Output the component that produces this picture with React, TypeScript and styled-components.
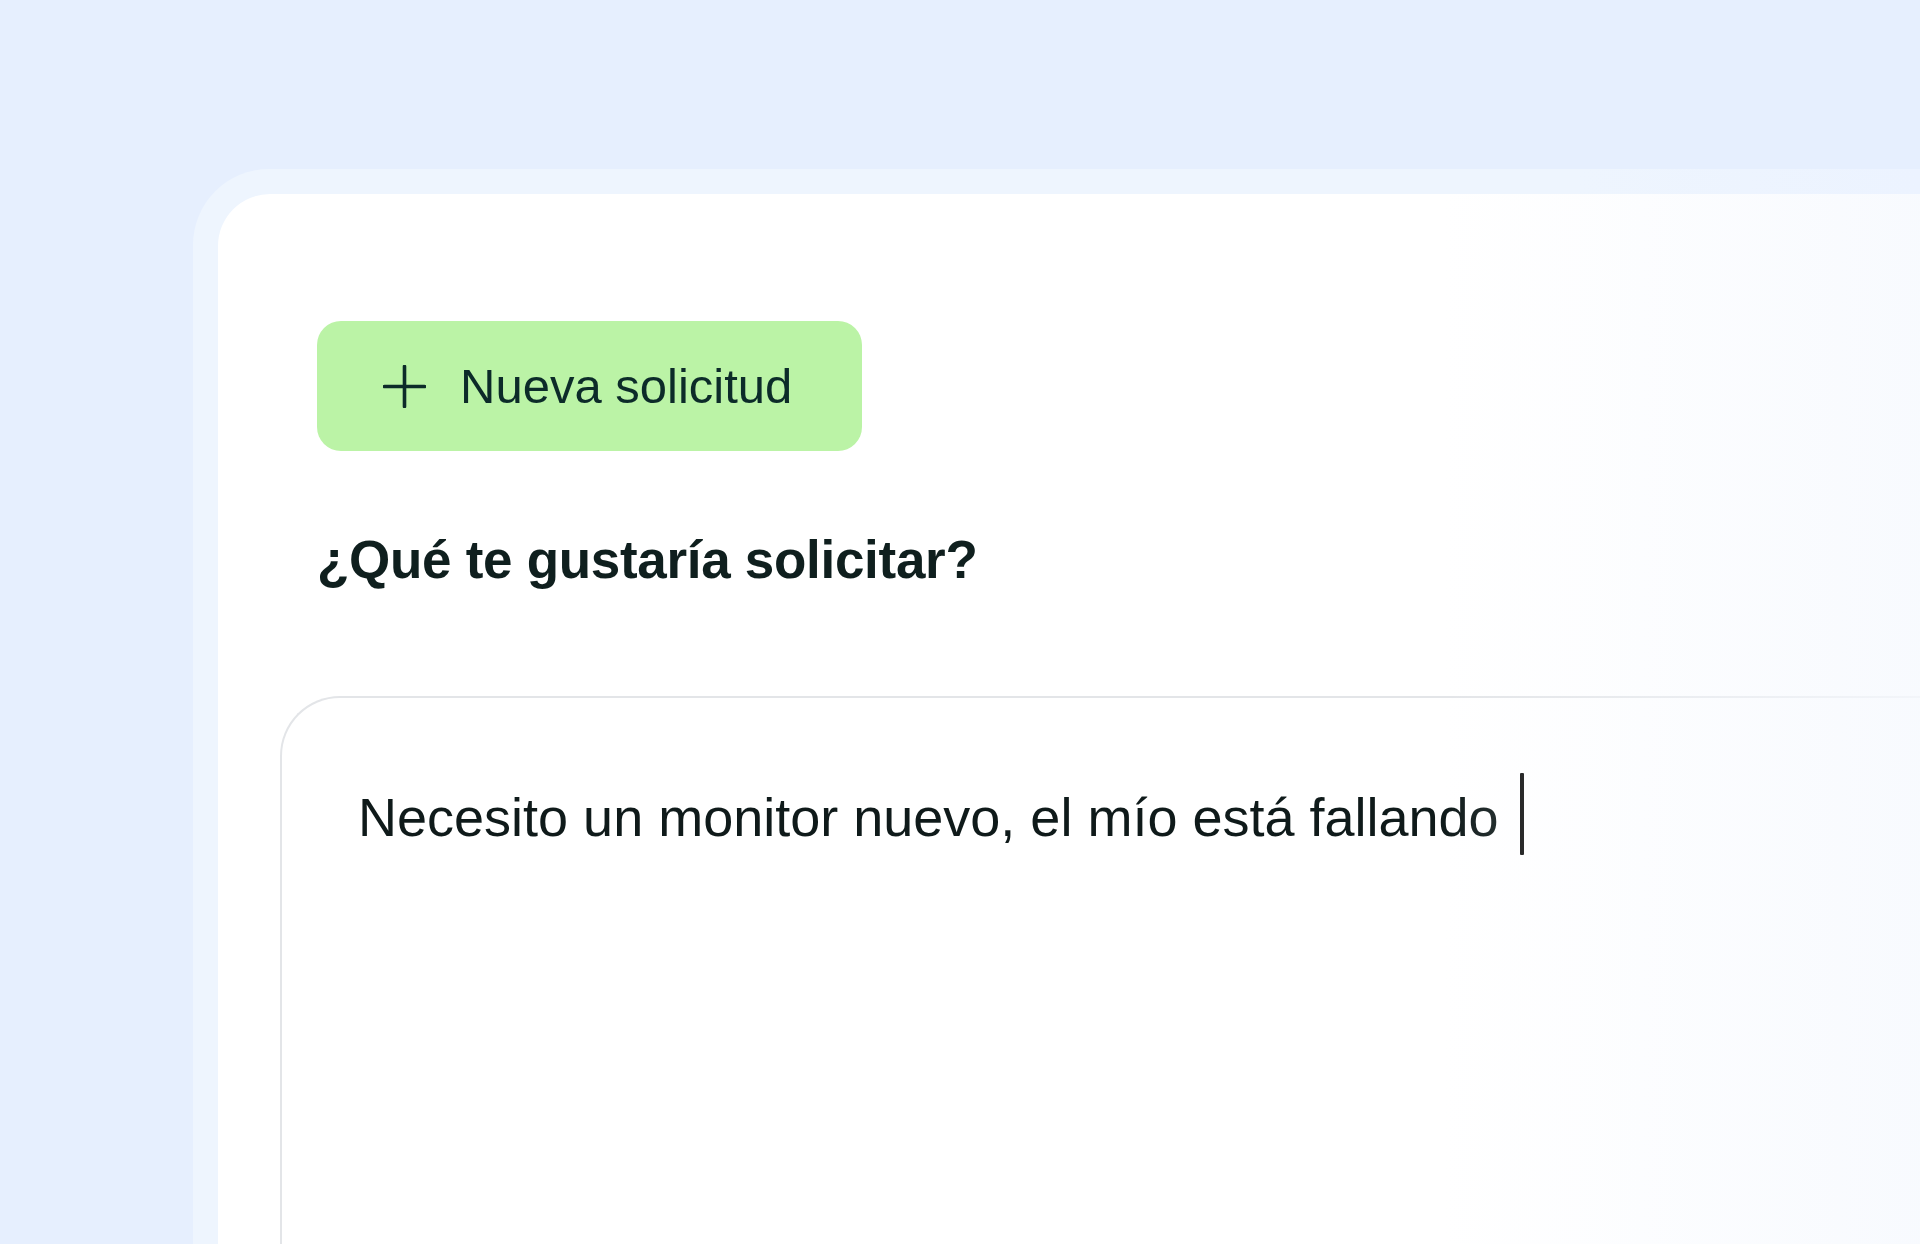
import React from "react";
import styled, { createGlobalStyle } from "styled-components";

const GlobalStyle = createGlobalStyle`
  html, body {
    margin: 0;
    padding: 0;
    height: 1244px;
    overflow: hidden;
    background: #e6effe;
    font-family: "Liberation Sans", Arial, sans-serif;
  }
  #root { height: 1244px; }
`;

const Page = styled.div`
  height: 1244px;
  box-sizing: border-box;
  padding: 169px 0 0 193px;
  display: flex;
  flex-direction: column;
`;

const Frame = styled.div`
  flex: 1;
  display: flex;
  flex-direction: column;
  padding: 25px 0 0 25px;
  background: linear-gradient(to right, #eef5fe 0%, #eef5fe 80%, #ecf3ff 100%);
  border-top-left-radius: 76px;
`;

const Card = styled.div`
  position: relative;
  flex: 1;
  display: flex;
  flex-direction: column;
  align-items: flex-start;
  padding: 127px 0 0 99px;
  background: #ffffff;
  border-top-left-radius: 52px;
  overflow: hidden;
`;

const Fade = styled.div`
  position: absolute;
  inset: 0;
  pointer-events: none;
  background: linear-gradient(
    to right,
    rgba(248, 250, 254, 0) 0%,
    rgba(248, 250, 254, 0) 72%,
    rgba(246, 249, 254, 0.8) 100%
  );
`;

const NewButton = styled.button`
  display: inline-flex;
  align-items: center;
  gap: 34px;
  height: 130px;
  width: 545px;
  box-sizing: border-box;
  padding: 0 0 0 66px;
  border: none;
  border-radius: 24px;
  background: #bbf3a6;
  color: #0c2b29;
  font-family: "Liberation Sans", Arial, sans-serif;
  font-size: 49px;
  line-height: 1;
  cursor: pointer;
`;

const PlusIcon = styled.svg`
  width: 43px;
  height: 43px;
  flex: none;
`;

const Heading = styled.h2`
  margin: 82px 0 0 0;
  font-size: 53px;
  line-height: 53px;
  font-weight: 700;
  color: #0f1f1e;
  letter-spacing: -0.3px;
`;

const InputBox = styled.div`
  align-self: stretch;
  flex: 1;
  margin: 110px 0 0 -37px;
  box-sizing: border-box;
  padding: 92px 0 0 76px;
  border: 2px solid #e3e5e8;
  border-right: none;
  border-bottom: none;
  border-top-left-radius: 60px;
`;

const InputRow = styled.div`
  display: flex;
  align-items: flex-start;
`;

const InputText = styled.span`
  font-size: 54px;
  line-height: 54px;
  color: #0f1a1a;
  white-space: nowrap;
`;

const Caret = styled.span`
  display: block;
  width: 4px;
  height: 82px;
  margin: -17px 0 0 21px;
  background: #0a0a0a;
  border-radius: 1px;
`;

export default function App() {
  return (
    <>
      <GlobalStyle />
      <Page>
        <Frame>
          <Card>
            <NewButton>
              <PlusIcon viewBox="0 0 43 43" fill="none">
                <path d="M21.5 1.5v40M1.5 21.5h40" stroke="#0c2b29" strokeWidth="3.6" strokeLinecap="round" />
              </PlusIcon>
              Nueva solicitud
            </NewButton>
            <Heading>¿Qué te gustaría solicitar?</Heading>
            <InputBox>
              <InputRow>
                <InputText>Necesito un monitor nuevo, el mío está fallando</InputText>
                <Caret />
              </InputRow>
            </InputBox>
            <Fade />
          </Card>
        </Frame>
      </Page>
    </>
  );
}
